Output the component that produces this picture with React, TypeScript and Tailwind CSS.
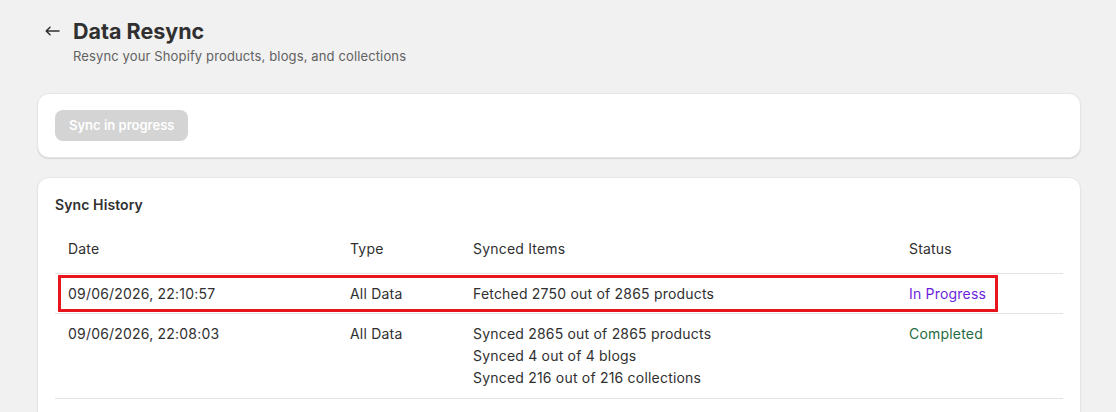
import React from "react";

type SyncRow = {
  date: string;
  type: string;
  items: string[];
  status: "In Progress" | "Completed";
  highlight?: boolean;
};

const rows: SyncRow[] = [
  {
    date: "09/06/2026, 22:10:57",
    type: "All Data",
    items: ["Fetched 2750 out of 2865 products"],
    status: "In Progress",
    highlight: true,
  },
  {
    date: "09/06/2026, 22:08:03",
    type: "All Data",
    items: [
      "Synced 2865 out of 2865 products",
      "Synced 4 out of 4 blogs",
      "Synced 216 out of 216 collections",
    ],
    status: "Completed",
  },
];

const cols = "grid grid-cols-[282px_123px_436px_1fr]";

function Card({ children, className = "" }: { children: React.ReactNode; className?: string }) {
  return (
    <div
      className={`rounded-xl border border-[#e6e6e6] bg-white shadow-[0_1px_1px_rgba(0,0,0,0.12)] ${className}`}
    >
      {children}
    </div>
  );
}

export default function App() {
  return (
    <div
      className="min-h-screen bg-[#f1f1f1] pl-[37px] pr-[35px] pt-[19px] text-[#303030]"
      style={{ fontFamily: "Inter, 'Noto Sans', sans-serif" }}
    >
      <div className="flex items-start gap-[13px] pl-[8px]">
        <button className="mt-[7px] text-[#303030]">
          {/* back arrow */}
          <svg width="15" height="10" viewBox="0 0 15 10" fill="none" stroke="currentColor" strokeWidth="1.5" strokeLinecap="round" strokeLinejoin="round">
            <path d="M14 5H1.2M5 1.2 1.2 5 5 8.8" />
          </svg>
        </button>
        <div>
          <h1 className="text-[21.5px] font-bold leading-6 text-[#303030]">Data Resync</h1>
          <p className="mt-[3px] text-[13px] leading-5 tracking-[0.13px] text-[#616161]">
            Resync your Shopify products, blogs, and collections
          </p>
        </div>
      </div>

      <Card className="mt-[27px] px-[17px] py-4">
        <button
          disabled
          className="h-[31px] rounded-lg bg-[#d4d4d4] px-[14px] text-[13px] font-semibold text-white"
        >
          Sync in progress
        </button>
      </Card>

      <Card className="mt-[19px] px-[17px] pt-[17px] pb-10">
        <h2 className="text-[14px] font-semibold leading-5 tracking-[0.1px] text-[#303030]">Sync History</h2>
        <div className="mt-[11px] text-[14px] tracking-[0.2px]">
          <div className={`${cols} border-b border-[#e3e3e3] pt-[12px] pb-[13px] leading-[22px] text-[#303030]`}>
            <div className="pl-[13px]">Date</div>
            <div className="pl-[13px]">Type</div>
            <div className="pl-[13px]">Synced Items</div>
            <div className="pl-[13px]">Status</div>
          </div>
          {rows.map((r, i) => (
            <div key={r.date} className="relative">
              <div
                className={`${cols} border-b border-[#e3e3e3] pt-[9px] leading-[22px] ${
                  i === 0 ? "pb-[8px]" : "pb-[9px]"
                }`}
              >
                <div className="pl-[13px]">{r.date}</div>
                <div className="pl-[13px]">{r.type}</div>
                <div className="pl-[13px]">
                  {r.items.map((it) => (
                    <div key={it}>{it}</div>
                  ))}
                </div>
                <div
                  className={`pl-[13px] ${
                    r.status === "In Progress" ? "text-[#6b1fdd]" : "text-[#1f6b43]"
                  }`}
                >
                  {r.status}
                </div>
              </div>
              {r.highlight && (
                <div className="pointer-events-none absolute left-[3px] top-[1px] h-[37px] w-[940px] border-[3px] border-[#e8141e]" />
              )}
            </div>
          ))}
        </div>
      </Card>
    </div>
  );
}
